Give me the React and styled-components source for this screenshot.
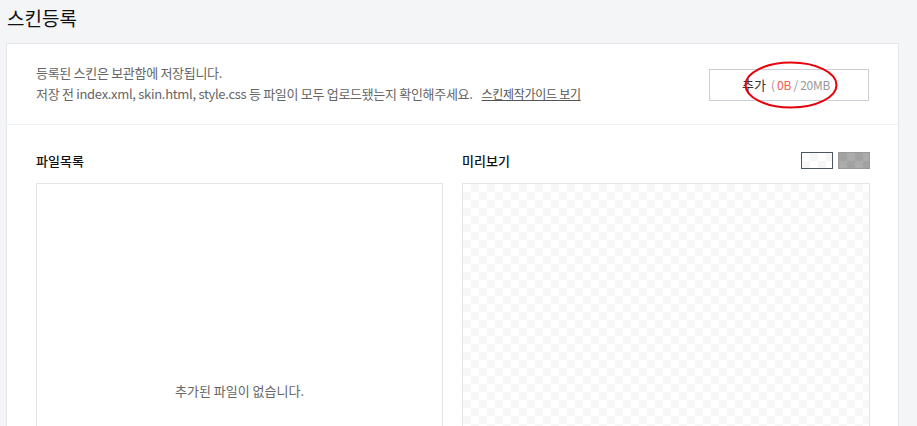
import React from "react";
import styled, { createGlobalStyle } from "styled-components";

const GlobalStyle = createGlobalStyle`
	html, body {
		margin: 0;
		padding: 0;
		background: #f4f5f7;
	}
	body {
		font-family: "Noto Sans CJK KR", "Noto Sans", sans-serif;
		color: #333;
	}
`;

const Page = styled.div`
	padding: 0 18px 0 6px;
	height: 426px;
	overflow: hidden;
`;

const Title = styled.h1`
	margin: 0;
	padding: 4px 0 0 1px;
	height: 39px;
	font-size: 19px;
	font-weight: 400;
	color: #111;
	line-height: 28px;
`;

const Card = styled.div`
	background: #fff;
	border: 1px solid #e3e5eb;
	border-bottom: none;
`;

const Header = styled.div`
	display: flex;
	align-items: center;
	justify-content: space-between;
	padding: 18px 29px 20px 29px;
	border-bottom: 1px solid #f0f1f3;
`;

const Notice = styled.p`
	margin: 0;
	font-size: 13px;
	line-height: 21px;
	color: #666;
	letter-spacing: -0.3px;
`;

const GuideLink = styled.a`
	margin-left: 9px;
	font-size: 12px;
	color: #555;
	text-decoration: underline;
	cursor: pointer;
`;

const AddButton = styled.button`
	position: relative;
	width: 160px;
	height: 32px;
	margin-top: 3px;
	background: #fff;
	border: 1px solid #c9d0d8;
	font-family: inherit;
	font-size: 13px;
	color: #333;
	cursor: pointer;
	text-align: left;
	padding: 0 0 0 32px;
`;

const Size = styled.span`
	color: #999;
	margin-left: 5px;
	font-size: 12px;
	letter-spacing: -0.3px;
`;

const Used = styled.span`
	color: #f0604e;
`;

const Ring = styled.svg`
	position: absolute;
	left: 34px;
	top: -9px;
	pointer-events: none;
`;

const Body = styled.div`
	display: grid;
	grid-template-columns: 407px 408px;
	column-gap: 19px;
	padding: 24px 29px 0 29px;
`;

const Column = styled.div`
	display: flex;
	flex-direction: column;
`;

const ColumnHead = styled.div`
	display: flex;
	align-items: center;
	justify-content: space-between;
	height: 22px;
	margin-bottom: 12px;
`;

const Label = styled.h2`
	margin: 0;
	font-size: 13px;
	font-weight: 500;
	color: #111;
`;

const Swatches = styled.div`
	display: flex;
	gap: 5px;
`;

const checker = (a, b, s) => `
	background-color: ${a};
	background-image:
		linear-gradient(45deg, ${b} 25%, transparent 25%, transparent 75%, ${b} 75%),
		linear-gradient(45deg, ${b} 25%, transparent 25%, transparent 75%, ${b} 75%);
	background-size: ${s * 2}px ${s * 2}px;
	background-position: 0 0, ${s}px ${s}px;
`;

const Swatch = styled.button`
	width: 32px;
	height: 17px;
	padding: 0;
	cursor: pointer;
	border: 1px solid ${(p) => (p.$dark ? "#999" : "#4a5566")};
	${(p) => (p.$dark ? checker("#a2a2a2", "#acacac", 8) : checker("#fff", "#f6f6f6", 8))}
`;

const FileBox = styled.div`
	height: 412px;
	border: 1px solid #e3e5eb;
	display: flex;
	align-items: center;
	justify-content: center;
	font-size: 13px;
	color: #666;
`;

const Preview = styled.div`
	height: 412px;
	border: 1px solid #e3e5eb;
	${checker("#fff", "#f7f7f8", 8)}
`;

export default function App() {
	return (
		<>
			<GlobalStyle />
			<Page>
				<Title>스킨등록</Title>
				<Card>
					<Header>
						<Notice>
							등록된 스킨은 보관함에 저장됩니다.
							<br />
							저장 전 index.xml, skin.html, style.css 등 파일이 모두 업로드됐는지 확인해주세요.
							<GuideLink>스킨제작가이드 보기</GuideLink>
						</Notice>
						<AddButton type="button">
							추가
							<Size>
								( <Used>0B</Used> / 20MB
							</Size>
							<Ring width="94" height="48" viewBox="0 0 94 48">
								<ellipse cx="47" cy="24" rx="45.5" ry="22.5" fill="none" stroke="#e8000b" strokeWidth="2" />
							</Ring>
						</AddButton>
					</Header>
					<Body>
						<Column>
							<ColumnHead>
								<Label>파일목록</Label>
							</ColumnHead>
							<FileBox>
								<span>추가된 파일이 없습니다.</span>
							</FileBox>
						</Column>
						<Column>
							<ColumnHead>
								<Label>미리보기</Label>
								<Swatches>
									<Swatch type="button" aria-label="밝은 배경" />
									<Swatch type="button" $dark aria-label="어두운 배경" />
								</Swatches>
							</ColumnHead>
							<Preview />
						</Column>
					</Body>
				</Card>
			</Page>
		</>
	);
}
